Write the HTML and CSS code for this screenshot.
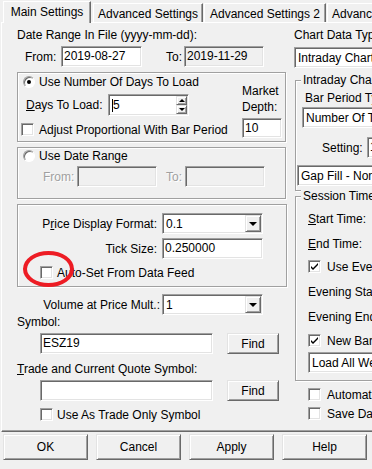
FILE: index.html
```html
<!DOCTYPE html>
<html lang="en">
<head>
    <meta charset="UTF-8">
    <title>Chart Settings</title>
    <link rel="stylesheet" href="styles.css">
</head>
<body>
<div class="dialog">
    <!-- Onglets -->
    <div class="tabs">
        <div class="tab tab-main active">Main Settings</div>
        <div class="tab tab-adv">Advanced Settings</div>
        <div class="tab tab-adv2">Advanced Settings 2</div>
        <div class="tab tab-adv3">Advanced Settings 3</div>
    </div>

    <div class="panel">
        <!-- Colonne gauche -->
        <div class="left">
            <div class="lbl date-lbl">Date Range In File (yyyy-mm-dd):</div>
            <div class="row from-row">
                <span class="from-lbl">From:</span>
                <div class="edit w81">2019-08-27</div>
                <span class="to-lbl">To:</span>
                <div class="edit w80 readonly">2019-11-29</div>
            </div>

            <div class="group g-days">
                <div class="g-days-left">
                    <div class="row radio-row">
                        <span class="radio checked"></span>
                        <span class="opt">Use Number Of Days To Load</span>
                    </div>
                    <div class="row days-row">
                        <span class="days-lbl"><u>D</u>ays To Load:</span>
                        <div class="spin">
                            <div class="spin-text"><span class="caret"></span>5</div>
                            <div class="spin-btns">
                                <div class="spin-btn"><span class="tri-up"></span></div>
                                <div class="spin-btn"><span class="tri-down"></span></div>
                            </div>
                        </div>
                    </div>
                    <div class="row check-row">
                        <span class="check"></span>
                        <span class="opt">Adjust Proportional With Bar Period</span>
                    </div>
                </div>
                <div class="g-days-right">
                    <div class="depth-lbl">Market<br>Depth:</div>
                    <div class="edit depth-edit">10</div>
                </div>
            </div>

            <div class="group g-range">
                <div class="row radio-row">
                    <span class="radio"></span>
                    <span class="opt">Use Date Range</span>
                </div>
                <div class="row range-row">
                    <span class="disabled range-from">From:</span>
                    <div class="edit w80 readonly"></div>
                    <span class="disabled range-to">To:</span>
                    <div class="edit w80 readonly"></div>
                </div>
            </div>

            <div class="group g-price">
                <div class="row pdf-row">
                    <span class="right-lbl">P<u>r</u>ice Display Format:</span>
                    <div class="combo w101">
                        <span class="combo-text">0.1</span>
                        <span class="drop"><span class="tri-down big"></span></span>
                    </div>
                </div>
                <div class="row tick-row">
                    <span class="right-lbl">Tick Size:</span>
                    <div class="edit w101">0.250000</div>
                </div>
                <div class="row check-row auto-row">
                    <span class="check"></span>
                    <span class="opt">Auto-Set From Data Feed</span>
                </div>
                <div class="mark"></div>
            </div>

            <div class="row vol-row">
                <span class="vol-lbl">Volume at Price Mult.:</span>
                <div class="combo w101">
                    <span class="combo-text">1</span>
                    <span class="drop"><span class="tri-down big"></span></span>
                </div>
            </div>
            <div class="lbl sym-lbl">Symbol:</div>
            <div class="row sym-row">
                <div class="edit sym-edit">ESZ19</div>
                <div class="btn find">Find</div>
            </div>
            <div class="lbl trade-lbl"><u>T</u>rade and Current Quote Symbol:</div>
            <div class="row sym-row trade-row">
                <div class="edit sym-edit"></div>
                <div class="btn find">Find</div>
            </div>
            <div class="row check-row trade-check">
                <span class="check"></span>
                <span class="opt">Use As Trade Only Symbol</span>
            </div>
        </div>

        <!-- Colonne droite -->
        <div class="right">
            <div class="lbl chart-lbl">Chart Data Type:</div>
            <div class="combo chart-combo">
                <span class="combo-text">Intraday Chart</span>
                <span class="drop"><span class="tri-down big"></span></span>
            </div>

            <div class="group g-intraday">
                <span class="gtitle">Intraday Chart Settings</span>
                <div class="lbl bar-lbl">Bar Period Type:</div>
                <div class="combo bar-combo">
                    <span class="combo-text">Number Of Trades Per Bar</span>
                    <span class="drop"><span class="tri-down big"></span></span>
                </div>
                <div class="row setting-row">
                    <span class="setting-lbl">Setting:</span>
                    <div class="edit setting-edit">1000</div>
                </div>
                <div class="combo gap-combo">
                    <span class="combo-text">Gap Fill - None</span>
                    <span class="drop"><span class="tri-down big"></span></span>
                </div>
            </div>

            <div class="group g-session">
                <span class="gtitle">Session Times</span>
                <div class="lbl sess-lbl start-lbl"><u>S</u>tart Time:</div>
                <div class="lbl sess-lbl end-lbl"><u>E</u>nd Time:</div>
                <div class="row check-row sess-check eve-check">
                    <span class="check on"><svg width="9" height="9" viewBox="0 0 9 9"><path d="M1 4l2 2 5-5v2l-5 5-2-2z" fill="#000"/></svg></span>
                    <span class="opt">Use Evening Session</span>
                </div>
                <div class="lbl sess-lbl eve-start">Evening Start Time:</div>
                <div class="lbl sess-lbl eve-end">Evening End Time:</div>
                <div class="row check-row sess-check newbar-check">
                    <span class="check on"><svg width="9" height="9" viewBox="0 0 9 9"><path d="M1 4l2 2 5-5v2l-5 5-2-2z" fill="#000"/></svg></span>
                    <span class="opt">New Bar At Start Of Day Session</span>
                </div>
                <div class="combo load-combo">
                    <span class="combo-text">Load All Weekend Data</span>
                    <span class="drop"><span class="tri-down big"></span></span>
                </div>
            </div>

            <div class="row check-row sess-check auto-check">
                <span class="check"></span>
                <span class="opt">Automatically Close Dialog</span>
            </div>
            <div class="row check-row sess-check save-check">
                <span class="check"></span>
                <span class="opt">Save Data To File</span>
            </div>
        </div>
    </div>

    <!-- Boutons du bas -->
    <div class="buttons">
        <div class="btn push default">OK</div>
        <div class="btn push">Cancel</div>
        <div class="btn push">Apply</div>
        <div class="btn push">Help</div>
    </div>
</div>
</body>
</html>
```

FILE: styles.css
```css
html, body {
    margin: 0;
    overflow: hidden;
}

body {
    width: 372px;
    height: 469px;
    background-color: #f0f0f0;
    font-family: "Liberation Sans", Arial, sans-serif;
    font-size: 12px;
    color: #000;
}

.dialog {
    width: 560px;
}

/* Onglets */
.tabs {
    display: flex;
    align-items: flex-start;
    height: 22px;
    padding-left: 3px;
}

.tab {
    box-sizing: border-box;
    height: 19px;
    margin-top: 3px;
    padding-top: 3px;
    line-height: 14px;
    text-align: center;
    white-space: nowrap;
    overflow: hidden;
    border: 1px solid #fff;
    border-right-color: #696969;
    border-bottom: none;
    box-shadow: inset -1px 0 0 #a0a0a0;
}

.tab.active {
    height: 22px;
    margin-top: 1px;
    position: relative;
    z-index: 1;
    background-color: #f0f0f0;
}

.tab-main { width: 88px; }
.tab-adv { width: 110px; margin-left: 2px; }
.tab-adv2 { width: 122px; margin-left: 1px; }
.tab-adv3 { width: 120px; margin-left: 1px; }

/* Panneau */
.panel {
    display: flex;
    box-sizing: border-box;
    height: 410px;
    margin-left: 1px;
    border-top: 1px solid #fff;
    border-left: 1px solid #fff;
    border-bottom: 1px solid #696969;
    box-shadow: inset 0 -1px 0 #a0a0a0;
}

.left {
    flex: none;
    width: 290px;
    box-sizing: border-box;
    padding-left: 15px;
    display: flex;
    flex-direction: column;
    align-items: flex-start;
}

.right {
    flex: none;
    width: 260px;
    box-sizing: border-box;
    padding-left: 2px;
    display: flex;
    flex-direction: column;
    align-items: flex-start;
}

.lbl {
    line-height: 14px;
    white-space: nowrap;
}

.row {
    display: flex;
    align-items: center;
    white-space: nowrap;
    flex: none;
}

.opt {
    margin-left: 4px;
}

/* Controles */
.edit {
    box-sizing: border-box;
    height: 21px;
    padding: 0 2px;
    line-height: 19px;
    background-color: #fff;
    border: 1px solid;
    border-color: #a0a0a0 #fff #fff #a0a0a0;
    box-shadow: inset 1px 1px 0 #696969, inset -1px -1px 0 #e3e3e3;
    white-space: nowrap;
    overflow: hidden;
    flex: none;
}

.edit.readonly {
    background-color: #f0f0f0;
}

.w80 { width: 80px; }
.w81 { width: 81px; }
.w101 { width: 101px; }

.combo {
    box-sizing: border-box;
    display: flex;
    align-items: center;
    height: 21px;
    background-color: #fff;
    border: 1px solid;
    border-color: #a0a0a0 #fff #fff #a0a0a0;
    box-shadow: inset 1px 1px 0 #696969, inset -1px -1px 0 #e3e3e3;
    padding: 1px;
    flex: none;
}

.combo-text {
    flex: 1;
    padding-left: 2px;
    white-space: nowrap;
    overflow: hidden;
}

.drop, .spin-btn, .btn {
    box-sizing: border-box;
    background-color: #f0f0f0;
    border: 1px solid;
    border-color: #e3e3e3 #696969 #696969 #e3e3e3;
    box-shadow: inset 1px 1px 0 #fff, inset -1px -1px 0 #a0a0a0;
}

.drop {
    width: 16px;
    height: 17px;
    display: flex;
    align-items: center;
    justify-content: center;
    flex: none;
}

.tri-down, .tri-up {
    width: 0;
    height: 0;
    border-left: 3px solid transparent;
    border-right: 3px solid transparent;
}

.tri-down { border-top: 3px solid #000; }
.tri-up { border-bottom: 3px solid #000; }

.tri-down.big {
    border-left-width: 4px;
    border-right-width: 4px;
    border-top-width: 4px;
}

.radio {
    box-sizing: border-box;
    width: 12px;
    height: 12px;
    border-radius: 50%;
    background-color: #fff;
    border: 1px solid;
    border-color: #a0a0a0 #fff #fff #a0a0a0;
    box-shadow: inset 1px 1px 0 #696969;
    display: flex;
    align-items: center;
    justify-content: center;
    flex: none;
}

.radio.checked::after {
    content: "";
    width: 4px;
    height: 4px;
    border-radius: 50%;
    background-color: #000;
}

.check {
    box-sizing: border-box;
    width: 13px;
    height: 13px;
    background-color: #fff;
    border: 1px solid;
    border-color: #a0a0a0 #fff #fff #a0a0a0;
    box-shadow: inset 1px 1px 0 #696969, inset -1px -1px 0 #e3e3e3;
    display: flex;
    align-items: center;
    justify-content: center;
    flex: none;
}

.group {
    box-sizing: border-box;
    border: 1px solid #a0a0a0;
    box-shadow: inset 1px 1px 0 #fff, 1px 1px 0 #fff;
    flex: none;
}

.gtitle {
    margin-top: -8px;
    margin-left: 5px;
    padding: 0 2px;
    line-height: 14px;
    background-color: #f0f0f0;
    white-space: nowrap;
}

.disabled {
    color: #a0a0a0;
    text-shadow: 1px 1px 0 #fff;
}

.btn {
    display: flex;
    align-items: center;
    justify-content: center;
    flex: none;
}

/* Colonne gauche */
.date-lbl { margin-top: 5px; }

.from-row { margin-top: 4px; height: 21px; }
.from-lbl { margin-left: 8px; width: 36px; }
.to-lbl { margin-left: 24px; width: 18px; }

.g-days {
    display: flex;
    margin-top: 5px;
    width: 269px;
    height: 70px;
}

.g-days-left {
    width: 224px;
    display: flex;
    flex-direction: column;
}

.radio-row { height: 14px; }
.radio-row .radio { margin-left: 5px; }
.g-days .radio-row { margin-top: 2px; }

.days-row { margin-top: 5px; height: 22px; }
.days-lbl { margin-left: 8px; width: 82px; }

.spin {
    box-sizing: border-box;
    display: flex;
    width: 81px;
    height: 22px;
    background-color: #fff;
    border: 1px solid;
    border-color: #a0a0a0 #fff #fff #a0a0a0;
    box-shadow: inset 1px 1px 0 #696969, inset -1px -1px 0 #e3e3e3;
    padding: 1px;
}

.spin-text {
    flex: 1;
    display: flex;
    align-items: center;
    padding-left: 2px;
}

.caret {
    width: 1px;
    height: 13px;
    background-color: #000;
}

.spin-btns {
    display: flex;
    flex-direction: column;
    width: 11px;
}

.spin-btn {
    flex: 1;
    display: flex;
    align-items: center;
    justify-content: center;
}

.check-row { height: 13px; }
.g-days .check-row { margin-top: 7px; }
.g-days .check-row .check { margin-left: 3px; }
.g-days .check-row .opt { margin-left: 5px; }

.g-days-right {
    display: flex;
    flex-direction: column;
}

.depth-lbl {
    margin-top: 10px;
    line-height: 16px;
}

.depth-edit {
    margin-top: 3px;
    width: 40px;
    height: 20px;
}

.g-range {
    display: flex;
    flex-direction: column;
    margin-top: 5px;
    width: 269px;
    height: 52px;
}

.g-range .radio-row { margin-top: 1px; }

.range-row { margin-top: 3px; height: 21px; }
.range-from { margin-left: 25px; width: 34px; }
.range-to { margin-left: 9px; width: 19px; }

.g-price {
    position: relative;
    display: flex;
    flex-direction: column;
    margin-top: 5px;
    width: 270px;
    height: 83px;
}

.pdf-row { margin-top: 8px; height: 21px; }
.tick-row { margin-top: 4px; height: 21px; }

.right-lbl {
    width: 144px;
    box-sizing: border-box;
    padding-right: 5px;
    text-align: right;
}

.auto-row { margin-top: 7px; }
.auto-row .check { margin-left: 22px; }

/* Annotation rouge */
.mark {
    position: absolute;
    left: 5px;
    top: 46px;
    width: 51px;
    height: 36px;
    box-sizing: border-box;
    border: 4px solid #ed1c24;
    border-radius: 50%;
}

.vol-row { margin-top: 7px; height: 21px; }
.vol-lbl {
    width: 145px;
    box-sizing: border-box;
    padding-right: 2px;
    text-align: right;
}

.sym-row { margin-top: 4px; height: 21px; }
.sym-edit { margin-left: 23px; width: 173px; }
.find { margin-left: 14px; width: 52px; height: 21px; }

.trade-lbl { margin-top: 8px; }
.trade-check { margin-top: 7px; }
.trade-check .check { margin-left: 23px; }

/* Colonne droite */
.chart-lbl { margin-top: 5px; }

.chart-combo {
    margin-top: 5px;
    width: 160px;
}

.g-intraday {
    display: flex;
    flex-direction: column;
    align-items: flex-start;
    margin-top: 12px;
    margin-left: 1px;
    width: 250px;
    height: 111px;
}

.bar-lbl { margin-top: 4px; margin-left: 9px; }

.bar-combo {
    margin-top: 2px;
    margin-left: 6px;
    width: 200px;
}

.setting-row { margin-top: 9px; height: 21px; }
.setting-lbl { margin-left: 26px; width: 45px; }
.setting-edit { width: 60px; }

.gap-combo {
    margin-top: 7px;
    margin-left: 1px;
    width: 200px;
}

.g-session {
    display: flex;
    flex-direction: column;
    align-items: flex-start;
    margin-top: 5px;
    margin-left: 1px;
    width: 250px;
    height: 185px;
}

.sess-lbl { margin-left: 12px; }
.start-lbl { margin-top: 9px; }
.end-lbl { margin-top: 11px; }

.sess-check .check { margin-left: 12px; }
.sess-check .opt { margin-left: 6px; }
.eve-check { margin-top: 9px; }
.eve-start { margin-top: 12px; }
.eve-end { margin-top: 11px; }
.newbar-check { margin-top: 10px; }

.load-combo {
    margin-top: 5px;
    margin-left: 12px;
    width: 200px;
}

.auto-check { margin-top: 7px; }
.auto-check .check { margin-left: 14px; }
.save-check { margin-top: 6px; }
.save-check .check { margin-left: 14px; }

/* Boutons du bas */
.buttons {
    display: flex;
    gap: 8px;
    margin-top: 2px;
    padding-left: 3px;
}

.push {
    width: 85px;
    height: 26px;
}
```
